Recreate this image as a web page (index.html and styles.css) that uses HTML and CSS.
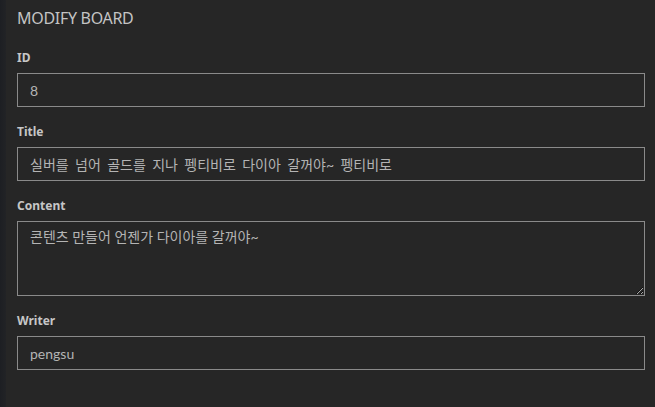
FILE: index.html
```html
<!DOCTYPE html>
<html lang="ko">
<head>
<meta charset="utf-8">
<link rel="stylesheet" href="styles.css">
</head>
<body>
<div class="page">
  <div class="side"></div>
  <main class="panel">
    <h1 class="heading">MODIFY BOARD</h1>
    <form class="form">
      <div class="group">
        <label class="label">ID</label>
        <input class="field" type="text" value="8" readonly>
      </div>
      <div class="group">
        <label class="label">Title</label>
        <input class="field" type="text" value="실버를 넘어 골드를 지나 펭티비로 다이아 갈꺼야~ 펭티비로">
      </div>
      <div class="group">
        <label class="label">Content</label>
        <textarea class="field area">콘텐츠 만들어 언젠가 다이아를 갈꺼야~</textarea>
      </div>
      <div class="group">
        <label class="label">Writer</label>
        <input class="field" type="text" value="pengsu" readonly>
      </div>
    </form>
  </main>
</div>
</body>
</html>
```

FILE: styles.css
```css
html, body {
  margin: 0;
  padding: 0;
  height: 100%;
  background: #262626;
}
body {
  font-family: "Noto Sans", "Noto Sans CJK KR", sans-serif;
  color: #c8c8c8;
}
.page {
  display: flex;
  min-height: 100%;
}
.side {
  width: 6px;
  flex: none;
  background: linear-gradient(to right, #1d1f23, #222326);
}
.panel {
  flex: 1;
  padding: 8px 10px 0 11px;
}
.heading {
  margin: 0 0 21px 0;
  font-size: 16px;
  line-height: 20px;
  font-weight: 400;
  color: #c4c4c4;
  letter-spacing: -0.3px;
}
.form {
  display: flex;
  flex-direction: column;
  gap: 16px;
}
.group {
  display: flex;
  flex-direction: column;
  gap: 6px;
}
.label {
  font-size: 12px;
  line-height: 18px;
  font-weight: 700;
  color: #c6c6c6;
}
.field {
  box-sizing: border-box;
  width: 100%;
  height: 34px;
  margin: 0;
  padding: 0 12px;
  background: #262626;
  border: 1px solid #8a8a8a;
  border-radius: 0;
  color: #b4b4b4;
  font-family: "Lato", "Noto Sans CJK KR", sans-serif;
  font-size: 14px;
  word-spacing: 2.8px;
  outline: none;
}
.area {
  height: 75px;
  padding: 5px 12px;
  line-height: 20px;
  word-spacing: 0;
  resize: vertical;
  display: block;
}
```
